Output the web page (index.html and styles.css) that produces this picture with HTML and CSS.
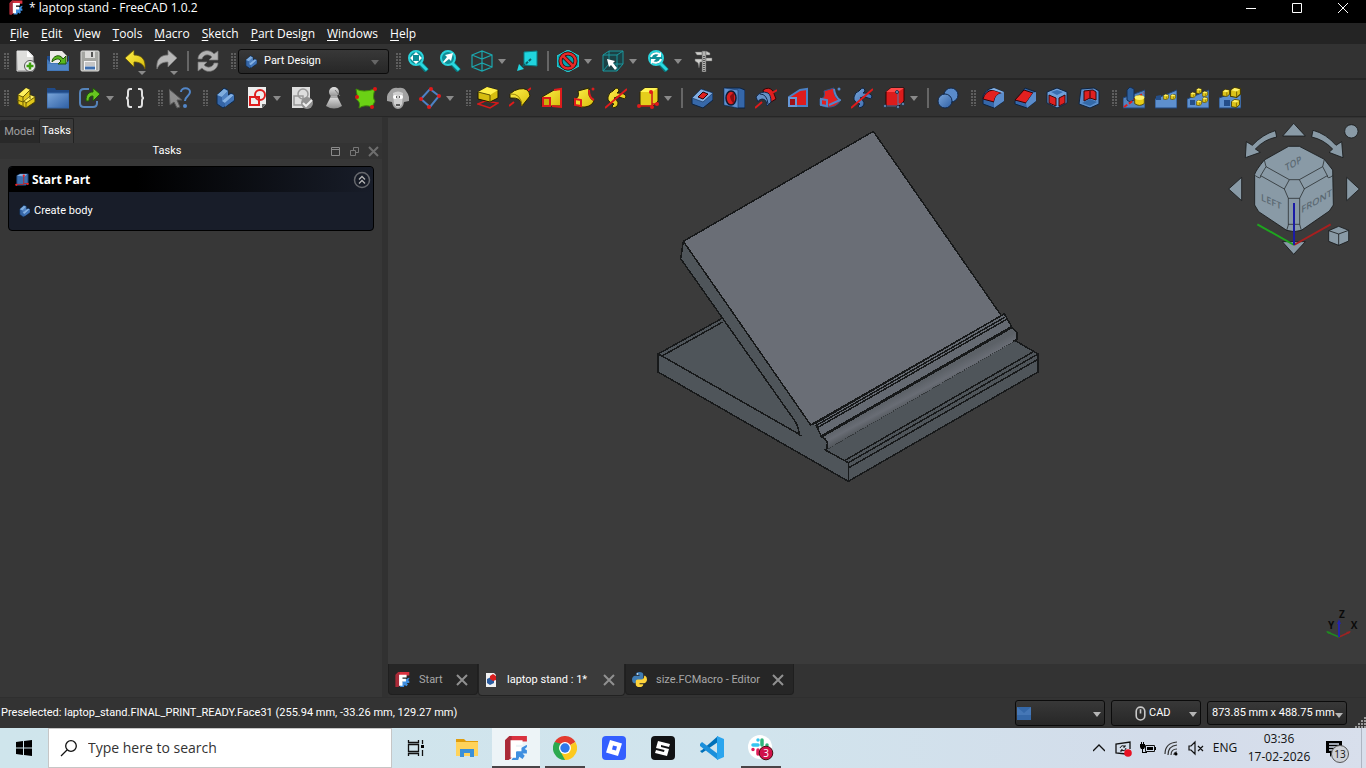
FILE: index.html
```html
<!DOCTYPE html>
<html lang="en">
<head>
<meta charset="utf-8">
<title>laptop stand - FreeCAD 1.0.2</title>
<link rel="stylesheet" href="styles.css">
</head>
<body>
<svg class="defs" aria-hidden="true">
  <defs>
    <linearGradient id="gy" x1="0" y1="0" x2="1" y2="1"><stop offset="0" stop-color="#fff04a"/><stop offset="1" stop-color="#d9bd0c"/></linearGradient>
    <linearGradient id="gb" x1="0" y1="0" x2="1" y2="1"><stop offset="0" stop-color="#7aa6da"/><stop offset="1" stop-color="#2f60a5"/></linearGradient>
    <linearGradient id="gg" x1="0" y1="0" x2="0" y2="1"><stop offset="0" stop-color="#e6e6e6"/><stop offset="1" stop-color="#8c8c8c"/></linearGradient>
  </defs>
  <symbol id="logo" viewBox="0 0 22 22"><path d="M1 4l4-4h16v5H8v14l-4 3H1z" fill="#d9323f"/><path d="M1 4l4-4h2v20l-3 2H1z" fill="#a92a38"/><path d="M21 0v8l-9 5-5 9h6l1-3 3 2 2-3-2-2h4v-3l-2-1 2-2z" fill="#3f8fe0"/><path d="M6 4h11v4h-6v2h5v4h-5v6H6z" fill="#fff"/></symbol>
  <symbol id="body" viewBox="0 0 22 22"><path d="M3 8l7-7 4 2v5l3-2 3 2v6L9 21l-6-4z" fill="#3565a6" stroke="#0d2a4d"/><path d="M3 8l7-6 4 2-6 6z" fill="#7fadde"/><path d="M8 10l6-6v5l-6 5z" fill="#4f82c2"/><path d="M8 14l6-5 3-2 3 1-9 8z" fill="#86b2e4"/><path d="M11 16v4l9-7V8z" fill="#4275b8"/></symbol>
  <symbol id="part" viewBox="0 0 22 22"><path d="M3 8l8-7 4 2v5l5 2v5l-9 6-8-4z" fill="#e0c61b" stroke="#4a4002"/><path d="M3 8l8-7 4 2-7 7zM8 14l7-6 5 2-9 6z" fill="#fff160"/><path d="M3 8l5 2 7-7M8 10v9M2 13l6 2 7-6M11 16v5M11 16l9-6M8 14l4 2M15 8v4" fill="none" stroke="#6b5c05"/></symbol>
  <symbol id="new" viewBox="0 0 22 22"><path d="M2 1h11l5 5v15H2z" fill="url(#gg)" stroke="#ddd"/><path d="M3 2h9l5 5v13H3z" fill="#dededc"/><path d="M12 1v6h6z" fill="#fff"/><circle cx="15" cy="16" r="5.500" fill="#eee" stroke="#555"/><path d="M15 12.500v7M11.500 16h7" stroke="#3c9e0c" stroke-width="2.500"/></symbol>
  <symbol id="open" viewBox="0 0 22 22"><path d="M0 6h3v15h18V6h1v15H0z" fill="#204a87"/><path d="M3 1h12l5 5v8H3z" fill="#ecebe8"/><path d="M0 9l4 4h14l4-2v10H0z" fill="#4379bb"/><path d="M1 14h20v6H1z" fill="#5286c5"/><path d="M5 12c0-6 8-9 11-3l3-3v8h-8l3-3c-3-4-7-1-9 1z" fill="#59b81e" stroke="#1f5208"/></symbol>
  <symbol id="save" viewBox="0 0 22 22"><rect x="2" y="1" width="18" height="20" rx="1" fill="#a5a6a2" stroke="#e0e0de"/><rect x="6" y="1" width="10" height="7" fill="#dcdcda"/><path d="M12 2h2v5h-2z" fill="#555"/><path d="M5 11h12v9H5z" fill="#f3f3f3"/><path d="M6 13h10M6 15h10" stroke="#999"/><path d="M6 18h10" stroke="#3e6fae" stroke-width="3"/></symbol>
  <symbol id="undo" viewBox="0 0 22 22"><path d="M1 8L10 0v5c8 0 12 5 11 14-2-5-5-7-11-7v5z" fill="url(#gy)" stroke="#635307" stroke-width=".8"/></symbol>
  <symbol id="redo" viewBox="0 0 22 22"><path d="M21 8L12 0v5C4 5 0 10 1 19c2-5 5-7 11-7v5z" fill="#b7b7b7" stroke="#777" stroke-width=".8"/></symbol>
  <symbol id="refresh" viewBox="0 0 22 22"><path d="M1 9C1 2 11-3 17 4l4-3v9h-9l3-3C11 3 6 5 5 9zM21 13c0 7-10 12-16 5l-4 3v-9h9l-3 3c4 4 9 2 10-2z" fill="#b3b3b3" stroke="#777" stroke-width=".7"/></symbol>
  <symbol id="mag" viewBox="0 0 22 22"><path d="M13 13l7 8" stroke="#0a7379" stroke-width="5"/><path d="M13 13l7 7" stroke="#28d9e0" stroke-width="3"/><circle cx="9" cy="8" r="7" fill="#0f8d96" stroke="#2ad4dc" stroke-width="2"/></symbol>
  <symbol id="fit" viewBox="0 0 22 22"><use href="#mag"/><path d="M9 2l3 3H6zM9 14l3-3H6zM3 8l3-3v6zM15 8l-3-3v6z" fill="#fff"/></symbol>
  <symbol id="fitsel" viewBox="0 0 22 22"><use href="#mag"/><path d="M4 12l4-5-2-2 8-2-2 8-2-2-5 4z" fill="#fff"/></symbol>
  <symbol id="wire" viewBox="0 0 22 22"><path d="M1 5l10-4 10 4v12l-10 4-10-4zM1 5l10 4 10-4M11 9v12M1 17l10-4 10 4M11 1v12" fill="none" stroke="#1ba6ad" stroke-width="1.200"/></symbol>
  <symbol id="toview" viewBox="0 0 22 22"><path d="M8 2l13-1v15l-13-1z" fill="#20d4de" stroke="#087e86"/><path d="M15 9l-9 8" stroke="#0b5f66" stroke-width="2" stroke-dasharray="3 1"/><path d="M1 21l2-7 5 5z" fill="#20d4de"/></symbol>
  <symbol id="nodraw" viewBox="0 0 22 22"><path d="M0 6l11-6 11 6v10l-11 6-11-6z" fill="#0aa2ad" stroke="#2ad9e2"/><circle cx="11" cy="11" r="7.500" fill="none" stroke="#2c0808" stroke-width="4"/><path d="M6 6l10 10" stroke="#2c0808" stroke-width="4"/><circle cx="11" cy="11" r="7.500" fill="none" stroke="#e52a2a" stroke-width="2.500"/><path d="M6 6l10 10" stroke="#e52a2a" stroke-width="2.500"/></symbol>
  <symbol id="boxsel" viewBox="0 0 22 22"><path d="M1 5l6-4h14v13l-6 7H1z" fill="#1c4145" stroke="#1b979d"/><path d="M1 5h14v16M15 5l6-4M7 1v13h14M7 14l-6 7" fill="none" stroke="#1b979d"/><path d="M5 9l8 2-2 2 4 5-2 2-4-5-2 2z" fill="#fff"/></symbol>
  <symbol id="magsync" viewBox="0 0 22 22"><use href="#mag"/><path d="M4 7c1-4 7-5 9-2M14 9c-1 4-7 5-9 2" fill="none" stroke="#fff" stroke-width="2"/><path d="M14 2v5H9zM4 14V9h5z" fill="#fff"/></symbol>
  <symbol id="caliper" viewBox="0 0 22 22"><path d="M10 1h4v21h-4z" fill="#b5b5b3" stroke="#555" stroke-width=".6"/><path d="M3 2h7v3H5zM3 9h7v3H8l-1 6-1-5-3-2zM14 1l4 2v2h-4zM14 8h6v3h-6z" fill="#d0d0cd" stroke="#666" stroke-width=".5"/><path d="M12 6v15" stroke="#555" stroke-dasharray="1 1" stroke-width="2"/></symbol>
  <symbol id="folder" viewBox="0 0 22 22"><path d="M0 1h8l1 2h13v5H0z" fill="#204a87"/><path d="M0 6h22v15H0z" fill="url(#gb)" stroke="#3465a4"/></symbol>
  <symbol id="link" viewBox="0 0 22 22"><path d="M10 2H5Q1 2 1 6v10q0 4 4 4h9q4 0 4-4v-2" fill="none" stroke="#5583b9" stroke-width="2"/><path d="M7 14c0-7 3-9 7-9V1l7 6-7 7V9c-3 0-4 1-4 5z" fill="#66c41f" stroke="#205609"/></symbol>
  <symbol id="braces" viewBox="0 0 22 22"><path d="M8 2H6Q4 2 4 5v3q0 3-2 3 2 0 2 3v3q0 3 2 3h2M14 2h2q2 0 2 3v3q0 3 2 3-2 0-2 3v3q0 3-2 3h-2" fill="none" stroke="#e0e0e0" stroke-width="2"/></symbol>
  <symbol id="what" viewBox="0 0 22 22"><path d="M0 2l13 11H8l3 7-3 1-3-6-4 3z" fill="#8d8d8d" stroke="#555"/><path d="M12 5c0-5 9-5 9 0 0 4-5 4-5 9" fill="none" stroke="#5286c8" stroke-width="2"/><circle cx="16" cy="19" r="2" fill="#5286c8"/></symbol>
  <symbol id="sketch" viewBox="0 0 22 22"><path d="M2 0h18v17l-4 4H2z" fill="#eee"/><path d="M20 17l-4 4v-4z" fill="#666"/><circle cx="14" cy="8" r="5" fill="none" stroke="#df1d1d" stroke-width="2"/><path d="M4 10h9v8H4z" fill="none" stroke="#df1d1d" stroke-width="2"/></symbol>
  <symbol id="valid" viewBox="0 0 22 22"><path d="M1 0h18v21H1z" fill="#dedede"/><circle cx="12" cy="7" r="5" fill="none" stroke="#999" stroke-width="1.500"/><path d="M3 9h9v9H3z" fill="none" stroke="#999" stroke-width="1.500"/><circle cx="16" cy="16" r="6" fill="#929292"/><path d="M12 16l3 3 6-6" stroke="#eee" stroke-width="2" fill="none"/></symbol>
  <symbol id="pawn" viewBox="0 0 22 22"><circle cx="11" cy="5" r="5" fill="url(#gg)"/><path d="M8 9h6l5 10q-8 5-16 0z" fill="url(#gg)"/><path d="M12 3l5 6M7 10h8" stroke="#777"/></symbol>
  <symbol id="shape" viewBox="0 0 22 22"><path d="M1 2q7 4 19 0-3 9 0 12l-3 6q-7-3-13 1 2-6-3-9 2-4 0-10z" fill="#6bd115" stroke="#3f8a08"/><g fill="#de1414"><circle cx="20" cy="2" r="2"/><circle cx="2" cy="10" r="2"/><circle cx="17" cy="20" r="2"/></g></symbol>
  <symbol id="sheep" viewBox="0 0 22 22"><path d="M3 4q3-4 8-3 6-1 8 3 4 5 3 10l-5 1q-1 7-6 7t-6-7l-5-1Q-1 8 3 4z" fill="#a2a2a2"/><path d="M6 6q5-3 10 0l-1 11q-4 7-8 0z" fill="#cfcfcf"/><circle cx="8" cy="10" r="2" fill="#fff"/><circle cx="14" cy="10" r="2" fill="#fff"/><path d="M9 10h1M12 10h1M9 18h4" stroke="#333" stroke-width="1.500"/></symbol>
  <symbol id="datum" viewBox="0 0 22 22"><path d="M2 12l9-10 9 7-9 11z" fill="none" stroke="#4d82c5" stroke-width="2"/><g fill="#e01b1b"><circle cx="2" cy="12" r="2"/><circle cx="12" cy="2" r="2"/><circle cx="20" cy="9" r="2"/><circle cx="10" cy="20" r="2"/></g></symbol>
  <symbol id="pad" viewBox="0 0 22 22"><path d="M1 17l7-3 13 2-8 5z" fill="none" stroke="#d81919" stroke-width="1.500"/><path d="M1 5l9-5 11 3v8l-8 4-12-3z" fill="#d6bd10" stroke="#1f1a00"/><path d="M1 5l9-5 11 3-8 5z" fill="#fff04a"/><path d="M1 5l12 3v7" fill="none" stroke="#5d5004"/></symbol>
  <symbol id="rev" viewBox="0 0 22 22"><path d="M0 19l5-4M16 6l6-5" stroke="#e01b1b" stroke-width="2"/><path d="M1 7q4-4 9-5 10-2 11 7l-8 10q0-9-12-8z" fill="url(#gy)" stroke="#2a2300"/><path d="M1 7q11-1 12 12" fill="none" stroke="#9c8607"/></symbol>
  <symbol id="loft" viewBox="0 0 22 22"><path d="M1 10L13 3l7-1v17H1z" fill="url(#gy)" stroke="#2a2300"/><path d="M13 3l7-1v18l-9-1" fill="none" stroke="#dd1c1c" stroke-width="2"/><path d="M2 11h7v8H2z" fill="#c9ae0c" stroke="#dd1c1c" stroke-width="2"/></symbol>
  <symbol id="sweep" viewBox="0 0 22 22"><path d="M5 4l11-3q-2 9 5 13-3 7-14 6l-6-2v-6q6-1 4-8z" fill="url(#gy)" stroke="#2a2300"/><path d="M2 12l6 1v6l-6-1zM16 3q0 8 5 10" fill="none" stroke="#dd1c1c" stroke-width="2"/><circle cx="20" cy="2" r="1.500" fill="#dd1c1c"/></symbol>
  <symbol id="helix" viewBox="0 0 22 22"><path d="M8 4q5-6 6 0l-2 2q9 0 9 4-1 3-4 1-4-3-8 0 7 5 2 9-3 2-4-1l2-2q-7-2-6-7 1-5 5-6z" fill="url(#gy)" stroke="#2a2300"/><path d="M0 21L22 2" stroke="#e01b1b" stroke-width="2"/></symbol>
  <symbol id="prim" viewBox="0 0 22 22"><path d="M3 5l5-4h13v13l-5 5H3z" fill="#e5ce1c" stroke="#302700"/><path d="M3 5l5-4h13l-6 4z" fill="#fff455"/><path d="M15 5v14H2M15 17h6" fill="none" stroke="#cb1919" stroke-width="1.500"/><g fill="#e01b1b"><circle cx="2" cy="19" r="2"/><circle cx="14" cy="5" r="2"/><circle cx="20" cy="17" r="2"/><circle cx="15" cy="20" r="2"/></g></symbol>
  <symbol id="pocket" viewBox="0 0 22 22"><path d="M1 11l9-9 12 4v7l-10 8-11-4z" fill="#3768a8" stroke="#0d2340"/><path d="M1 11l9-9 12 4-10 9z" fill="#82ade0" stroke="#17365f" stroke-width=".7"/><path d="M7 10l5-5 5 2-5 5z" fill="#e02020" stroke="#2b0404"/></symbol>
  <symbol id="hole" viewBox="0 0 22 22"><path d="M1 1h16l5 2v18h-7l-14-3z" fill="#3567a9" stroke="#0d2340"/><path d="M1 1l14 2v18L1 18z" fill="#5f91d0" stroke="#17365f" stroke-width=".6"/><ellipse cx="8" cy="11" rx="5" ry="7" fill="#dc2020" stroke="#141a30" stroke-width="1.500"/><path d="M11 5v12q-4-4-4-8z" fill="#8a0d12"/></symbol>
  <symbol id="groove" viewBox="0 0 22 22"><path d="M8 3q6-4 10 1l3 8-5 3-7-8z" fill="#df2020" stroke="#360505"/><path d="M1 10q5-7 12-4 3 2 3 9l-4 4q0-7-5-7-4 1-4 3z" fill="#648fc5" stroke="#10284b"/><path d="M5 7q7 0 8 10" fill="none" stroke="#10284b"/><path d="M0 21l7-6M17 6l5-3" stroke="#e01b1b" stroke-width="2"/></symbol>
  <symbol id="sloft" viewBox="0 0 22 22"><path d="M2 10L13 3l7-1v17H2z" fill="#df1c1c" stroke="#4b81c5" stroke-width="2"/><path d="M2 11h7v8H2z" fill="#9d1117" stroke="#6798d7" stroke-width="2"/></symbol>
  <symbol id="ssweep" viewBox="0 0 22 22"><path d="M5 4l10-3q-1 9 6 13-4 7-14 6l-6-2v-6q6-1 4-8z" fill="#e32020" stroke="#30588e"/><path d="M2 12l6 1v6l-6-1zM15 2q1 8 6 11l-11 5" fill="none" stroke="#5387c8" stroke-width="2"/><circle cx="20" cy="2" r="1.500" fill="#5387c8"/></symbol>
  <symbol id="shelix" viewBox="0 0 22 22"><path d="M8 4q5-6 6 0l-2 2q9 0 9 4-1 3-4 1-4-3-8 0 7 5 2 9-3 2-4-1l2-2q-7-2-6-7 1-5 5-6z" fill="url(#gb)" stroke="#0d2340"/><path d="M0 21L22 2" stroke="#e01b1b" stroke-width="2"/></symbol>
  <symbol id="sprim" viewBox="0 0 22 22"><path d="M3 5l5-4h13v13l-5 5H3z" fill="#dc1c1c" stroke="#300"/><path d="M3 5l5-4h13l-6 4z" fill="#ff4848"/><path d="M15 5v14H2M15 17h6" fill="none" stroke="#5078a8"/><g fill="#739fd0" stroke="#234"><circle cx="2" cy="19" r="1.500"/><circle cx="14" cy="5" r="1.500"/><circle cx="20" cy="17" r="1.500"/><circle cx="15" cy="20" r="1.500"/></g></symbol>
  <symbol id="bool" viewBox="0 0 22 22"><circle cx="14" cy="8" r="7" fill="#5a8bca" stroke="#10284b"/><circle cx="8" cy="14" r="7" fill="url(#gb)" stroke="#10284b"/></symbol>
  <symbol id="fillet" viewBox="0 0 22 22"><path d="M1 9q3-7 10-8l11 4v9l-10 7-11-4z" fill="#3567a9" stroke="#0d2340"/><path d="M1 12q2-8 10-9l9 3q-7 1-8 9z" fill="#e32020" stroke="#330505"/><path d="M12 15q1-8 8-9l2-1v9l-10 7z" fill="#5b8ccb"/><path d="M7 3l5-2 10 4-2 1-9-3z" fill="#86b2e4"/></symbol>
  <symbol id="chamfer" viewBox="0 0 22 22"><path d="M1 14L11 1l11 4v9l-9 7-12-4z" fill="#3567a9" stroke="#0d2340"/><path d="M1 13l9-10 9 3-7 10z" fill="#e32020" stroke="#330505"/><path d="M12 16l7-10 3-1v9l-9 7z" fill="#5b8ccb"/></symbol>
  <symbol id="draft" viewBox="0 0 22 22"><path d="M1 5l10-4 10 4v11l-10 5-10-5z" fill="#6f9fd8" stroke="#0d2340"/><path d="M3 8l7 3v8l-7-3zM19 8l-6 3v8l6-3z" fill="#df2020" stroke="#3b0909"/><path d="M5 5l6-2 6 2-6 3z" fill="#3b6fb1"/></symbol>
  <symbol id="thick" viewBox="0 0 22 22"><path d="M3 2l13-1 5 3v13l-9 4-11-4z" fill="#5b8ecb" stroke="#0d2340"/><path d="M6 4l9-1 3 2v8l-6-2-6 3z" fill="#df2020" stroke="#3b0909"/><path d="M4 16l8-4 7 3-7 4z" fill="#346aa9"/><path d="M12 3v9" stroke="#690b10" stroke-width="1.500"/></symbol>
  <symbol id="cyl" viewBox="0 0 9 10"><path d="M.500 3q4-4 8 0v5q-4 3-8 0z" fill="#e6cd18" stroke="#4a3e00" stroke-width=".7"/><ellipse cx="4.500" cy="3" rx="4" ry="2" fill="#fff26a"/></symbol>
  <symbol id="cube" viewBox="0 0 10 10"><path d="M.500 3L4 .500l5.500 1v5L6 9.500l-5.500-1z" fill="#dcc31a" stroke="#4a3e00"/><path d="M1 3l3-2 5 1-3 2z" fill="#fff26a"/><path d="M6 4v5" stroke="#7a6905"/></symbol>
  <symbol id="mirror" viewBox="0 0 22 22"><path d="M0 21V11L22 3v18z" fill="#5483be" stroke="#1f457b"/><path d="M4 3l3-3 4 2v11l-4 2-3-2z" fill="#2f619f" stroke="#142d51"/><path d="M1 20l20-14" stroke="#e31b1b" stroke-width="2" stroke-dasharray="4 2"/><use href="#cyl" x="11" y="7" width="11" height="12"/></symbol>
  <symbol id="linear" viewBox="0 0 22 22"><path d="M0 21V12L22 3v18z" fill="#5e90ce" stroke="#1f457b"/><path d="M1 9l5-1v5H1z" fill="#244e89"/><use href="#cube" x="8" y="7" width="6" height="6"/><use href="#cube" x="15" y="7" width="6" height="6"/></symbol>
  <symbol id="polar" viewBox="0 0 22 22"><path d="M0 21V12L22 3v18z" fill="#5e90ce" stroke="#1f457b"/><use href="#cube" x="9" y="1" width="6" height="6"/><use href="#cube" x="3" y="5" width="6" height="6"/><use href="#cube" x="15" y="4" width="6" height="6"/><use href="#cube" x="15" y="10" width="6" height="6"/><use href="#cube" x="9" y="13" width="6" height="6"/><path d="M3 13h5v5H3z" fill="#244e89"/></symbol>
  <symbol id="multi" viewBox="0 0 22 22"><path d="M0 21V11L22 3v18z" fill="#5e90ce" stroke="#1f457b"/><use href="#cube" x="3" y="2" width="8" height="8"/><use href="#cube" x="11" y="0" width="11" height="11"/><use href="#cube" x="12" y="12" width="9" height="9"/><path d="M5 13h6v6H5z" fill="#244e89"/></symbol>
  <symbol id="startpart" viewBox="0 0 16 16"><path d="M2 3l4-2h9v11l-3 2H2z" fill="#3d70b0" stroke="#17365f"/><path d="M2 3l4-2h8l-3 3z" fill="#83afe1"/><path d="M10 3v10H2M10 12h5" fill="none" stroke="#c52020"/><circle cx="10" cy="3" r="1.300" fill="#e22"/><circle cx="1.500" cy="13.500" r="1.300" fill="#e22"/><circle cx="14.500" cy="12.500" r="1.300" fill="#e22"/></symbol>
  <symbol id="doc" viewBox="0 0 12 16"><path d="M1 1h8l2 2v12H1z" fill="#f2f2f2"/><path d="M2 7l4-2 3 2v4l-4 2-3-2z" fill="#2c5da0"/><path d="M5 4l3-2 3 2v4l-3 1-3-2z" fill="#d81e1e"/></symbol>
  <symbol id="python" viewBox="0 0 16 16"><path d="M8 0q4 0 4 3v4q0 2-2 2H6q-2 0-2 3H2q-2-1-2-4t3-4h5V3H4q0-3 4-3z" fill="#3f7cb4"/><path d="M8 16q-4 0-4-3v-3q0-2 2-2h4q3 0 3-4h1q2 1 2 4t-3 4H8v1h4q0 3-4 3z" fill="#ffd43b"/><circle cx="6" cy="2" r=".8" fill="#fff"/></symbol>
</svg>

<div class="app">
  <header class="titlebar">
    <svg class="app-logo"><use href="#logo"/></svg>
    <span class="title">* laptop stand - FreeCAD 1.0.2</span>
    <button aria-label="Minimize"><svg viewBox="0 0 12 12"><path d="M1 6.500h10" stroke="#fff"/></svg></button>
    <button aria-label="Maximize"><svg viewBox="0 0 12 12"><path d="M1.500 1.500h9v9h-9z" fill="none" stroke="#fff"/></svg></button>
    <button aria-label="Close"><svg viewBox="0 0 12 12"><path d="M1 1l10 10M11 1L1 11" stroke="#fff"/></svg></button>
  </header>

  <nav class="menubar">
    <button><u>F</u>ile</button><button><u>E</u>dit</button><button><u>V</u>iew</button><button><u>T</u>ools</button><button><u>M</u>acro</button><button><u>S</u>ketch</button><button><u>P</u>art Design</button><button><u>W</u>indows</button><button><u>H</u>elp</button>
  </nav>

  <div class="toolbar">
    <i class="grip first"></i>
    <button class="tool" aria-label="New"><svg><use href="#new"/></svg></button>
    <button class="tool" aria-label="Open"><svg><use href="#open"/></svg></button>
    <button class="tool" aria-label="Save"><svg><use href="#save"/></svg></button>
    <i class="grip"></i>
    <button class="tool more" aria-label="Undo"><svg><use href="#undo"/></svg></button>
    <button class="tool more" aria-label="Redo"><svg><use href="#redo"/></svg></button>
    <i class="sep"></i>
    <button class="tool" aria-label="Refresh"><svg><use href="#refresh"/></svg></button>
    <i class="grip"></i>
    <div class="combo workbench"><svg><use href="#body"/></svg><select aria-label="Workbench"><option>Part Design</option></select></div>
    <i class="grip"></i>
    <button class="tool" aria-label="Fit all"><svg><use href="#fit"/></svg></button>
    <button class="tool" aria-label="Fit selection"><svg><use href="#fitsel"/></svg></button>
    <button class="tool" aria-label="Isometric"><svg><use href="#wire"/></svg></button><button class="drop" aria-label="Views"></button>
    <button class="tool" aria-label="Align to selection"><svg><use href="#toview"/></svg></button>
    <i class="sep"></i>
    <button class="tool" aria-label="Draw style"><svg><use href="#nodraw"/></svg></button><button class="drop" aria-label="Draw styles"></button>
    <button class="tool" aria-label="Box selection"><svg><use href="#boxsel"/></svg></button><button class="drop" aria-label="Selection modes"></button>
    <button class="tool" aria-label="Sync view"><svg><use href="#magsync"/></svg></button><button class="drop" aria-label="Sync options"></button>
    <button class="tool" aria-label="Measure"><svg><use href="#caliper"/></svg></button>
  </div>

  <div class="toolbar">
    <i class="grip first"></i>
    <button class="tool" aria-label="Create part"><svg><use href="#part"/></svg></button>
    <button class="tool" aria-label="Create group"><svg><use href="#folder"/></svg></button>
    <button class="tool" aria-label="Create link"><svg><use href="#link"/></svg></button><button class="drop" aria-label="Link options"></button>
    <button class="tool" aria-label="Variable set"><svg><use href="#braces"/></svg></button>
    <i class="grip"></i>
    <button class="tool" aria-label="What's this"><svg><use href="#what"/></svg></button>
    <i class="grip"></i>
    <button class="tool" aria-label="Create body"><svg><use href="#body"/></svg></button>
    <button class="tool" aria-label="Create sketch"><svg><use href="#sketch"/></svg></button><button class="drop" aria-label="Sketch options"></button>
    <button class="tool" aria-label="Validate sketch"><svg><use href="#valid"/></svg></button>
    <button class="tool" aria-label="Check geometry"><svg><use href="#pawn"/></svg></button>
    <button class="tool" aria-label="Shape binder"><svg><use href="#shape"/></svg></button>
    <button class="tool" aria-label="Clone"><svg><use href="#sheep"/></svg></button>
    <button class="tool" aria-label="Datum"><svg><use href="#datum"/></svg></button><button class="drop" aria-label="Datum options"></button>
    <i class="grip"></i>
    <button class="tool" aria-label="Pad"><svg><use href="#pad"/></svg></button>
    <button class="tool" aria-label="Revolution"><svg><use href="#rev"/></svg></button>
    <button class="tool" aria-label="Additive loft"><svg><use href="#loft"/></svg></button>
    <button class="tool" aria-label="Additive pipe"><svg><use href="#sweep"/></svg></button>
    <button class="tool" aria-label="Additive helix"><svg><use href="#helix"/></svg></button>
    <button class="tool" aria-label="Additive primitive"><svg><use href="#prim"/></svg></button><button class="drop" aria-label="Additive primitives"></button>
    <i class="sep"></i>
    <button class="tool" aria-label="Pocket"><svg><use href="#pocket"/></svg></button>
    <button class="tool" aria-label="Hole"><svg><use href="#hole"/></svg></button>
    <button class="tool" aria-label="Groove"><svg><use href="#groove"/></svg></button>
    <button class="tool" aria-label="Subtractive loft"><svg><use href="#sloft"/></svg></button>
    <button class="tool" aria-label="Subtractive pipe"><svg><use href="#ssweep"/></svg></button>
    <button class="tool" aria-label="Subtractive helix"><svg><use href="#shelix"/></svg></button>
    <button class="tool" aria-label="Subtractive primitive"><svg><use href="#sprim"/></svg></button><button class="drop" aria-label="Subtractive primitives"></button>
    <i class="sep"></i>
    <button class="tool" aria-label="Boolean"><svg><use href="#bool"/></svg></button>
    <i class="grip"></i>
    <button class="tool" aria-label="Fillet"><svg><use href="#fillet"/></svg></button>
    <button class="tool" aria-label="Chamfer"><svg><use href="#chamfer"/></svg></button>
    <button class="tool" aria-label="Draft"><svg><use href="#draft"/></svg></button>
    <button class="tool" aria-label="Thickness"><svg><use href="#thick"/></svg></button>
    <i class="grip"></i>
    <button class="tool" aria-label="Mirrored"><svg><use href="#mirror"/></svg></button>
    <button class="tool" aria-label="Linear pattern"><svg><use href="#linear"/></svg></button>
    <button class="tool" aria-label="Polar pattern"><svg><use href="#polar"/></svg></button>
    <button class="tool" aria-label="Multi transform"><svg><use href="#multi"/></svg></button>
  </div>

  <main class="workspace">
    <aside class="dock">
      <div class="dock-tabs"><button>Model</button><button class="active">Tasks</button></div>
      <div class="dock-title">
        <span>Tasks</span>
        <button aria-label="Collapse"><svg viewBox="0 0 11 11"><path d="M1.500 1.500h8v8h-8zM2 3.500h7" fill="none" stroke="#8a8a8a"/></svg></button>
        <button aria-label="Float"><svg viewBox="0 0 11 11"><path d="M1.500 4.500h5v5h-5zM4.500 4V1.500h5v5H7" fill="none" stroke="#777"/></svg></button>
        <button aria-label="Close panel"><svg viewBox="0 0 11 11"><path d="M1 1l9 9M10 1l-9 9" stroke="#6e6e6e" stroke-width="2"/></svg></button>
      </div>
      <section class="task">
        <h2><svg><use href="#startpart"/></svg><span>Start Part</span>
          <button aria-label="Fold"><svg viewBox="0 0 18 18"><circle cx="9" cy="9" r="7.500" fill="none" stroke="#66686d" stroke-width="1.500"/><path d="M6 8.500l3-3 3 3M6 12.500l3-3 3 3" fill="none" stroke="#b5b5b5" stroke-width="1.300"/></svg></button></h2>
        <a href="#body"><svg><use href="#body"/></svg>Create body</a>
      </section>
    </aside>

    <section class="mdi">
      <div class="view">
        <svg class="scene" viewBox="0 0 978 546">
          <svg x="252" y="2" width="410" height="370" viewBox="0 0 1230 1110">
            <defs><linearGradient id="roll" gradientUnits="userSpaceOnUse" x1="838" y1="789" x2="862" y2="834"><stop offset="0" stop-color="#5c6167"/><stop offset=".45" stop-color="#696d75"/><stop offset="1" stop-color="#4c5155"/></linearGradient></defs>
            <g stroke="#17191a" stroke-width="4.500" stroke-linejoin="round">
              <path d="M54 702L300 565 800 560 1126 662 1194 702V756L625 1084 54 756z" fill="#4f555a"/>
              <path d="M66 708L248 606M66 708L480 944M54 702l12 6" fill="none"/>
              <path d="M613 1022L1182 694M625 1028L1194 702M625 1044L1194 718M625 1028V1084M552 988l73 40" fill="none"/>
              <path d="M562 988L1131 660V640Q1126 628 1112 622L543 950Q560 958 562 970z" fill="url(#roll)" stroke="none"/>
              <path d="M512 915L1082 587 1094 582 1114 622 545 950z" fill="#656a72" stroke="none"/>
              <path d="M130 364L122 416 470 914Q480 926 476 944L560 990 562 970Q560 955 543 950L526 918z" fill="#4f555a" stroke="none"/>
              <path d="M130 364L122 416 464 902Q480 928 476 944L484 948" fill="none"/>
              <path d="M130 364L700 34 1084 587 512 915z" fill="#6a6e76"/>
              <path d="M512 915l16-6L1092 582M526 918L1094 592M534 922L1100 598M528 914l16 36M1092 580l24 42" fill="none"/>
              <path d="M543 950L1114 622" fill="none" stroke-width="8"/>
              <path d="M543 950Q560 956 562 970L560 990M1114 622L1131 638V658L1120 664" fill="none"/>
              <path d="M565 986L1126 662" fill="none" stroke="#34383b" stroke-width="3" stroke-dasharray="4 3"/>
            </g>
          </svg>
        </svg>
        <svg class="navcube" viewBox="0 9 450 426">
          <g fill="#899aa6" stroke="#17191a" stroke-width="2.500">
            <path d="M233 25l35 38h-68zM233 418l-34-38h69zM38 222l39-35v70zM430 222l-38-35v70z"/>
            <path d="M178 47Q140 58 109 91L91 80 88 128 133 112 118 102Q145 73 182 66zM291 46Q330 56 360 91L377 80 381 128 339 112 350 102Q322 73 287 66z"/>
            <circle cx="406" cy="49" r="20"/>
            <path d="M218 94h32L325 133 350 165 352 270 340 288 256 346 234 350 212 346 128 290 116 270 116 178Q120 165 145 135z"/>
            <path d="M118 182Q136 195 134 182L150 155 145 135M350 182q-16 12-16 0L320 155 325 133M150 155L220 194M134 182L205 222M320 155L250 194M334 182L264 222M220 194h30l15 28-14 28h-34l-12-28zM217 250v80l-5 16M251 250v78l5 18M217 328h34" fill="none" stroke-width="2"/>
            <path d="M338 347l30-13 30 12v32l-30 13-30-12z"/><path d="M338 347l30 10 30-11M368 357v34" fill="none"/>
          </g>
          <g class="faces">
            <text transform="translate(234 156) rotate(-30) skewX(-20)">TOP</text>
            <text transform="translate(166 270) skewY(25)">LEFT</text>
            <text transform="translate(302 268) skewY(-30)">FRONT</text>
          </g>
          <g fill="none" stroke-width="6"><path d="M124 328L234 390" stroke="#1ea51e"/><path d="M344 328L234 390" stroke="#a81f1f"/><path d="M234 264V390" stroke="#1b1ba6"/></g>
        </svg>
        <svg class="axes" viewBox="0 -6 42 38">
          <path d="M19 27L7 22" stroke="#208820" stroke-width="1.500"/><path d="M19 27l11-5" stroke="#9c2323" stroke-width="1.500"/><path d="M19 27V11" stroke="#2424a8" stroke-width="2"/><path d="M17 14l2-5 2 5z" fill="#2424a8"/><path d="M6 21l5 1-2 2z" fill="#208820"/><path d="M31 21l-5 1 2 2z" fill="#9c2323"/>
          <text x="22" y="8">Z</text><text x="11" y="19">Y</text><text x="34" y="19">X</text>
        </svg>
      </div>
      <div class="doc-tabs">
        <div class="tab"><svg class="t-logo"><use href="#logo"/></svg><span>Start</span><button aria-label="Close Start"><svg viewBox="0 0 12 12"><path d="M1 1l10 10M11 1L1 11"/></svg></button></div>
        <div class="tab active"><svg class="t-doc"><use href="#doc"/></svg><span>laptop stand : 1*</span><button aria-label="Close laptop stand"><svg viewBox="0 0 12 12"><path d="M1 1l10 10M11 1L1 11"/></svg></button></div>
        <div class="tab"><svg class="t-logo"><use href="#python"/></svg><span>size.FCMacro - Editor</span><button aria-label="Close editor"><svg viewBox="0 0 12 12"><path d="M1 1l10 10M11 1L1 11"/></svg></button></div>
      </div>
    </section>
  </main>

  <footer class="status">
    <p>Preselected: laptop_stand.FINAL_PRINT_READY.Face31 (255.94 mm, -33.26 mm, 129.27 mm)</p>
    <div class="combo report"><svg viewBox="0 0 14 13"><path d="M0 0h14v13H0z" fill="#3568a8"/><path d="M0 0l7 6 7-6v8H0z" fill="#4577b6"/></svg><select aria-label="Notifications"><option></option></select></div>
    <div class="combo nav"><svg viewBox="0 0 10 14"><rect x="1" y="1" width="8" height="12" rx="4" fill="none" stroke="#c8c8c8" stroke-width="1.500"/><path d="M5 3v4" stroke="#c8c8c8" stroke-width="1.500"/></svg><select aria-label="Navigation style"><option>CAD</option></select></div>
    <div class="combo dims"><select aria-label="View size"><option>873.85 mm x 488.75 mm</option></select></div>
    <svg class="sizegrip" viewBox="0 0 12 12"><path d="M11 1v11M8 4v8M5 7v5M2 10v2" stroke="#999" stroke-width="2" stroke-dasharray="2 1"/></svg>
  </footer>
</div>

<div class="taskbar">
  <button class="start" aria-label="Start"><svg viewBox="0 0 16 16"><path d="M0 2l7-1v6.500H0zM8 1l8-1v7.500H8zM0 8.500h7V15l-7-1zM8 8.500h8V16l-8-1z"/></svg></button>
  <label class="search"><svg viewBox="0 0 18 18"><circle cx="11" cy="7" r="5.300" fill="none" stroke="#111" stroke-width="1.300"/><path d="M7 11l-6 6" stroke="#111" stroke-width="1.300"/></svg><input type="text" placeholder="Type here to search" aria-label="Search"></label>
  <div class="apps">
    <button class="views" aria-label="Task view"><svg class="s18" viewBox="0 0 18 18"><path d="M1.500 5.500h10v7h-10zM1.500 1v2.500h10V1M1.500 17v-2.500h10V17M15.500 1v4M15.500 11v6" fill="none" stroke="#111" stroke-width="1.300"/><path d="M14 6h3v3h-3z"/></svg></button>
    <button aria-label="File Explorer"><svg viewBox="0 0 24 24"><path d="M1 3h8l2 2h12v6H1z" fill="#e09d0c"/><path d="M1 6h22v14H1z" fill="#ffd35b"/><path d="M5 21v-8h14v8h-4v-4H9v4z" fill="#3b90d8"/></svg></button>
    <button class="on current" aria-label="FreeCAD"><svg><use href="#logo"/></svg></button>
    <button class="on" aria-label="Chrome"><svg viewBox="0 0 24 24"><path d="M12 12L1.600 6A12 12 0 0 1 22.400 6z" fill="#e33b2e"/><path d="M12 12L1.600 6A12 12 0 0 0 12 24z" fill="#2da94f"/><path d="M12 12L22.400 6A12 12 0 0 1 12 24z" fill="#fcc91f"/><path d="M7 14.500L12 24l5-9z" fill="#fcc91f"/><path d="M1.600 6L7 15l2-7z" fill="#2da94f"/><circle cx="12" cy="12" r="6" fill="#fff"/><circle cx="12" cy="12" r="4.700" fill="#2f77ea"/></svg></button>
    <button aria-label="Roblox"><svg viewBox="0 0 24 24"><rect width="24" height="24" rx="4" fill="#335fff"/><path d="M8 4l12 3.500L16 20 4 16.500z" fill="#fff"/><path d="M11 9.500l4 1-1 4-4-1z" fill="#335fff"/></svg></button>
    <button aria-label="Roblox Studio"><svg viewBox="0 0 24 24"><rect width="24" height="24" rx="4" fill="#111214"/><path d="M7 5l12 3-1 3-8-2v2l8 2-2 7-12-3 1-3 8 2 .5-2L5 12z" fill="#fff"/></svg></button>
    <button aria-label="Visual Studio Code"><svg viewBox="0 0 24 24"><path d="M0 15l2 2L18 6V0L2 14z" fill="#0070b8"/><path d="M0 8l2-2 16 12v6L0 10z" fill="#1a8fdb"/><path d="M17 0l7 3v18l-7 3z" fill="#2ba5ee"/></svg></button>
    <button class="on" aria-label="Slack"><svg class="s26" viewBox="0 0 26 26"><circle cx="12" cy="12" r="12" fill="#fff"/><g fill="none" stroke-width="3.500" stroke-linecap="round"><path d="M5 10h5M10 5h0" stroke="#36c5f0"/><path d="M14 5v5M19 10h0" stroke="#2eb67d"/><path d="M10 15v4M5 14.500h0" stroke="#e01e5a"/><path d="M14 14.500h5" stroke="#ecb22e"/></g><circle cx="18" cy="18" r="6.800" fill="#d0114a" stroke="#411" stroke-width="1"/><text x="18" y="22">3</text></svg></button>
  </div>
  <div class="tray">
    <svg class="t12" viewBox="0 0 12 12"><path d="M0 9l6-6 6 6" fill="none" stroke="#111" stroke-width="1.300"/></svg>
    <svg viewBox="0 0 17 17"><path d="M11 14L1 13V4l14-2v7" fill="none" stroke="#111" stroke-width="1.300"/><path d="M5 8q2-4 5-1M11 8q-1 4-5 2M10 5v2H8M6 12v-2h2" fill="none" stroke="#111"/><circle cx="13" cy="13" r="3.800" fill="#e81123"/></svg>
    <svg viewBox="0 0 17 17"><path d="M6.500 5.500h9v6h-9z" fill="none" stroke="#111"/><path d="M8 7h6v3H8zM16 7h1v3h-1zM1 4h5v3l-1 2H2L1 7zM2 2h1v2H2zM4 2h1v2H4zM3 9h1v3h4v1H3z"/></svg>
    <svg viewBox="0 0 17 17"><path d="M2 14Q2 3 14 2M5 15Q5 6 14 5M8 15q0-6 6-6M11 15q0-3 3-3" fill="none" stroke="#333" stroke-width="1.200"/><circle cx="13" cy="14" r="1.500"/></svg>
    <svg viewBox="0 0 17 17"><path d="M2 6h2l4-4v12l-4-4H2zM11 6l5 5M16 6l-5 5" fill="none" stroke="#111" stroke-width="1.200"/></svg>
    <span class="lang">ENG</span>
    <time class="clock">03:36<br>17-02-2026</time>
    <span class="notice"><svg viewBox="0 0 17 17"><path d="M0 1h16v12H7l-3 4v-4H0z"/><path d="M3 4h10M3 7h10M3 10h7" stroke="#d3dcea" stroke-width="1.300"/></svg><b>13</b></span>
    <i class="peek"></i>
  </div>
</div>
</body>
</html>
```
FILE: styles.css
```css
* { box-sizing: border-box; }
body {
  margin: 0;
  height: 100vh;
  display: flex;
  flex-direction: column;
  overflow: hidden;
  background: #333;
  color: #fff;
  font: 11px/14px Roboto, "Noto Sans", sans-serif;
}
button, select, input { font: inherit; color: inherit; border: 0; background: none; padding: 0; margin: 0; }
button { display: flex; align-items: center; justify-content: center; flex: none; }
svg { display: block; flex: none; }
.defs { position: absolute; width: 0; height: 0; }
.app { flex: 1; min-height: 0; display: flex; flex-direction: column; }
.titlebar, .menubar, .task h2, .taskbar { font-family: "Open Sans", "Noto Sans", sans-serif; }

.titlebar { display: flex; align-items: flex-start; height: 23px; background: #000; padding-left: 9px; font-size: 12px; line-height: 16px; }
.app-logo { width: 14px; height: 15px; margin-right: 6px; }
.title { flex: 1; }
.titlebar button { width: 46px; height: 15px; }
.titlebar button svg { width: 12px; height: 12px; }

.menubar { display: flex; height: 21px; align-items: center; background: #242424; padding-left: 4px; font-size: 12px; line-height: 16px; }
.menubar button { padding: 0 6px; display: block; }
.menubar u { text-underline-offset: 2px; }

.toolbar { display: flex; flex: none; height: 36px; align-items: center; background: #323232; border-bottom: 2px solid #262626; }
.toolbar + .toolbar { height: 37px; border-bottom-width: 1px; }
.tool { width: 32px; height: 32px; }
.tool svg { width: 22px; height: 22px; }
.more { position: relative; }
.more::after { content: ""; position: absolute; right: 5px; bottom: 2px; border: 4px solid transparent; border-top-color: #8a8a8a; border-bottom: 0; }
.drop { width: 13px; height: 32px; justify-content: flex-start; }
.drop::before { content: ""; border: 4px solid transparent; border-top: 5px solid #8a8a8a; border-bottom: 0; }
.sep { width: 9px; height: 20px; flex: none; background: linear-gradient(#666, #666) 4px 0 / 2px 100% no-repeat; }
.grip { width: 13px; height: 16px; flex: none; padding: 0 1px 0 7px; }
.grip.first { width: 10px; padding-left: 4px; }
.grip::before { content: ""; display: block; height: 100%; background: radial-gradient(circle at 1px 1px, #5e5e5e 1px, transparent 1px) 0 0 / 3px 3px; }

.combo { position: relative; border: 1px solid #0b0b0b; border-radius: 3px; background: linear-gradient(#383838, #272727); }
.combo svg { position: absolute; pointer-events: none; }
.combo select { appearance: none; width: 100%; height: 100%; }
.combo::after { content: ""; position: absolute; right: 3px; top: 11px; border: 4px solid transparent; border-top: 5px solid #b5b5b5; border-bottom: 0; pointer-events: none; }
.workbench { width: 151px; height: 25px; margin-left: 1px; }
.workbench svg { left: 5px; top: 5px; width: 14px; height: 14px; }
.workbench select { padding-left: 25px; }
.workbench::after { right: 9px; top: 10px; border-top-color: #666; }

.workspace { flex: 1; min-height: 0; display: flex; }
.dock { width: 388px; flex: none; border-right: 6px solid #313131; background: #373737; }
.dock-tabs { display: flex; align-items: flex-end; height: 26px; }
.dock-tabs button { width: 39px; height: 23px; background: #292929; color: #a0a0a0; border-radius: 2px 2px 0 0; }
.dock-tabs .active { width: 35px; height: 25px; background: #3a3a3a; color: #fff; border: 1px solid #222; border-bottom: 0; }
.dock-title { display: flex; align-items: center; height: 16px; background: #333; gap: 2px; }
.dock-title span { flex: 1; text-align: center; padding-left: 9px; }
.dock-title button { width: 17px; }
.dock-title button svg { width: 11px; height: 11px; }
.task { margin: 7px 8px; border: 1px solid #000; border-radius: 4px; background: #181d29; padding-bottom: 11px; }
.task h2 { display: flex; align-items: center; gap: 3px; height: 25px; margin: 0 0 10px; padding: 0 2px 0 6px; font-size: 12px; line-height: 16px; background: linear-gradient(90deg, #000 35%, #181d29); border-radius: 4px 4px 0 0; }
.task h2 svg { width: 14px; height: 14px; }
.task h2 span { flex: 1; }
.task h2 button svg { width: 18px; height: 18px; }
.task a { display: flex; align-items: center; gap: 3px; padding-left: 9px; height: 17px; color: #fff; text-decoration: none; }
.task a svg { width: 13px; height: 14px; }

.mdi { flex: 1; min-width: 0; display: flex; flex-direction: column; }
.view { position: relative; flex: 1; min-height: 0; background: #3b3b3b; border-top: 1px solid #333; }
.scene { width: 100%; height: 100%; }
.scene path { shape-rendering: crispEdges; }
.navcube { position: absolute; top: 0; right: 0; width: 150px; height: 142px; }
.faces text { font: 600 28px "Open Sans", sans-serif; fill: #5b6972; text-anchor: middle; }
.axes { position: absolute; right: 4px; bottom: 22px; width: 42px; height: 38px; }
.axes text { font: 700 10px "Open Sans", sans-serif; fill: #0a0a0a; text-anchor: middle; }

.doc-tabs { display: flex; height: 33px; background: #333; align-items: flex-start; }
.tab { display: flex; align-items: center; height: 31px; background: #262626; border: 1px solid #1f1f1f; border-top: 0; border-radius: 0 0 4px 4px; color: #a8a8a8; padding: 1px 9px 0 6px; }
.tab.active { background: #3b3b3b; color: #fff; height: 32px; border-color: #222; }
.tab span { flex: 1; }
.tab button svg { width: 12px; height: 12px; stroke: #909090; stroke-width: 2; }
.t-logo { width: 15px; height: 15px; margin-right: 9px; }
.tab:nth-child(1) { width: 90px; }
.tab:nth-child(2) { width: 147px; }
.tab:nth-child(3) { width: 169px; }
.t-doc { width: 12px; height: 16px; margin-right: 10px; }

.status { display: flex; align-items: center; height: 31px; flex: none; background: #333; border-top: 1px solid #2f2f2f; }
.status p { flex: 1; margin: 0; padding-left: 1px; white-space: nowrap; }
.status .combo { height: 26px; width: 90px; margin-right: 6px; }
.status .dims { width: 140px; height: 24px; }
.report svg { width: 14px; height: 13px; left: 1px; top: 6px; }
.nav svg { width: 11px; height: 15px; left: 23px; top: 5px; }
.nav select { padding-left: 37px; }
.dims select { padding-left: 4px; }
.sizegrip { width: 12px; height: 12px; align-self: flex-end; margin-left: 1px; }

.taskbar { flex: none; height: 40px; display: flex; background: linear-gradient(90deg, #cfe5ec, #d1e4ed 55%, #d3dcea 85%, #d8dfec); color: #111; font-size: 12px; }
.start { width: 48px; }
.start svg { width: 16px; height: 16px; }
.search { display: flex; align-items: center; width: 344px; background: #fff; border: 1px solid #c6c6c6; padding-left: 11px; gap: 10px; }
.search svg { width: 18px; height: 18px; }
.search input { flex: 1; min-width: 0; outline: 0; font-size: 14px; line-height: 20px; }
.search input::placeholder { color: #333; opacity: 1; }
.apps { display: flex; gap: 1px; flex: 1; }
.apps button { width: 48px; height: 40px; position: relative; }
.apps .views { margin-right: 2px; }
.apps svg { width: 24px; height: 24px; }
.apps .s18 { width: 18px; height: 18px; }
.apps .s26 { width: 26px; height: 26px; }
.apps .s26 text { font: 10px "Open Sans", sans-serif; fill: #fff; text-anchor: middle; }
.apps .on::after { content: ""; position: absolute; left: 4px; right: 4px; bottom: 0; height: 2px; background: #4a4548; }
.apps .current { background: #edf4f7; }
.apps .current::after { left: 0; right: 0; }
.tray { display: flex; align-items: center; }
.tray svg { width: 17px; height: 17px; margin-left: 7px; }
.tray .t12 { width: 12px; height: 12px; margin-left: 0; margin-right: 3px; }
.lang { width: 42px; text-align: center; }
.clock { width: 66px; line-height: 18px; text-align: center; font-size: 12px; margin-right: 7px; }
.notice { position: relative; width: 42px; height: 17px; }
.notice b { position: absolute; left: 12px; top: 5px; width: 18px; height: 18px; border: 1px solid #555; border-radius: 9px; background: #cfd2d8; font: 10px/16px "Open Sans", sans-serif; text-align: center; }
.peek { width: 5px; height: 40px; border-left: 1px solid #aeb5c2; }
```
